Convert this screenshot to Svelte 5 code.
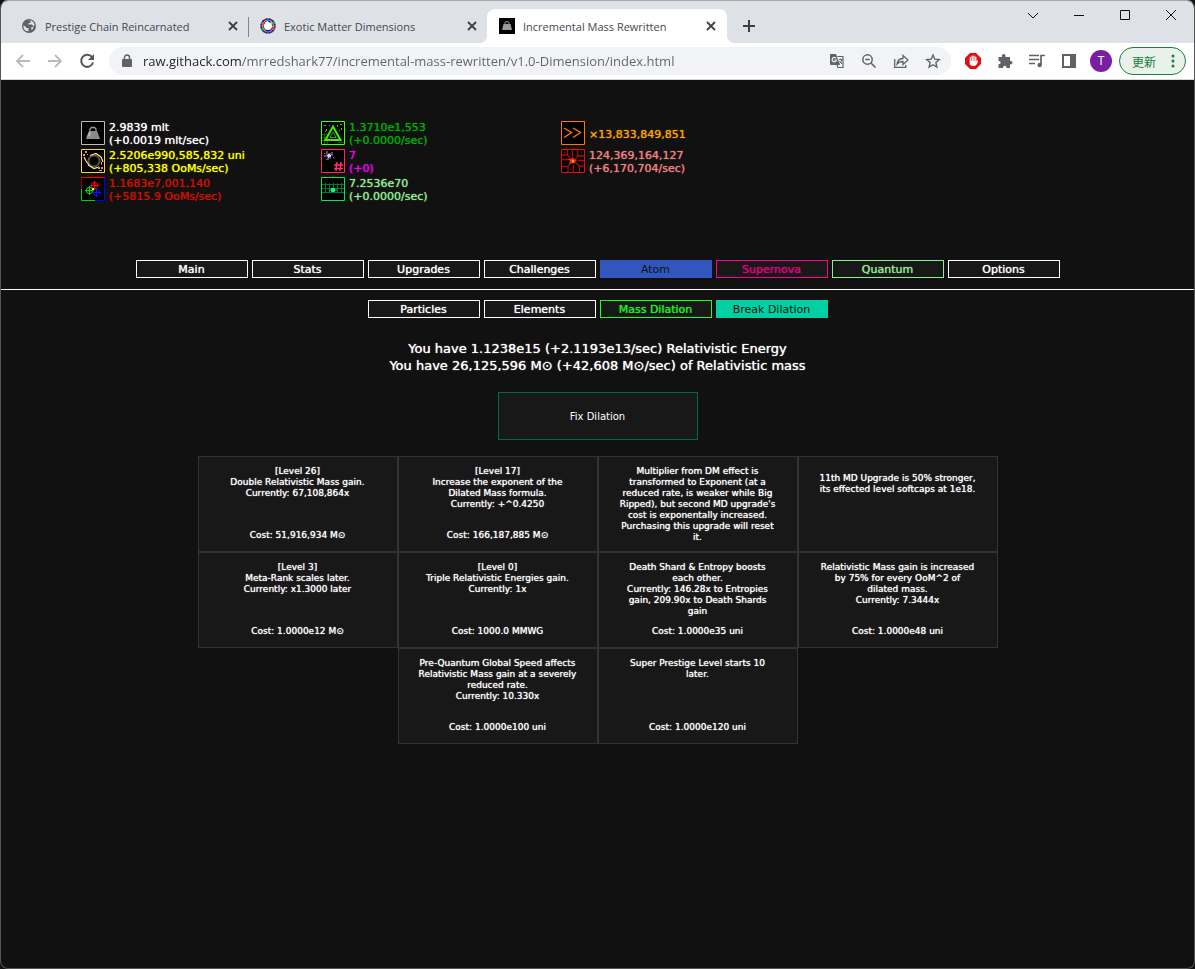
<script>
  const openTabs = [
    { title: 'Prestige Chain Reincarnated', icon: 'globe', active: false },
    { title: 'Exotic Matter Dimensions', icon: 'wheel', active: false },
    { title: 'Incremental Mass Rewritten', icon: 'mass', active: true }
  ];
  const windowButtons = [
    { label: 'Search tabs', d: 'M2 5l5 5 5-5' },
    { label: 'Minimize', d: 'M2 7.500h10' },
    { label: 'Maximize', d: 'M2.500 2.500h9v9h-9z' },
    { label: 'Close', d: 'M2 2l10 10M12 2L2 12' }
  ];
  const resources = [
    [
      { icon: 'mass', name: 'Mass', color: '#ffffff', lines: ['2.9839 mlt', '(+0.0019 mlt/sec)'] },
      { icon: 'hole', name: 'Black hole', color: '#ffff00', lines: ['2.5206e990,585,832 uni', '(+805,338 OoMs/sec)'] },
      { icon: 'quark', name: 'Quarks', color: '#cc1100', lines: ['1.1683e7,001,140', '(+5815.9 OoMs/sec)'] }
    ],
    [
      { icon: 'dilated', name: 'Dilated mass', color: '#00ae00', lines: ['1.3710e1,553', '(+0.0000/sec)'] },
      { icon: 'nova', name: 'Supernova', color: '#f000f0', lines: ['7', '(+0)'] },
      { icon: 'foam', name: 'Quantum foam', color: '#90ee90', lines: ['7.2536e70', '(+0.0000/sec)'] }
    ],
    [
      { icon: 'speed', name: 'Global speed', color: '#ffa500', lines: ['×13,833,849,851'] },
      { icon: 'shard', name: 'Death shards', color: '#f08080', lines: ['124,369,164,127', '(+6,170,704/sec)'] }
    ]
  ];
  const mainTabs = [
    { label: 'Main' }, { label: 'Stats' }, { label: 'Upgrades' }, { label: 'Challenges' },
    { label: 'Atom', kind: 'atom' }, { label: 'Supernova', kind: 'supernova' },
    { label: 'Quantum', kind: 'quantum' }, { label: 'Options' }
  ];
  const subTabs = [
    { label: 'Particles' }, { label: 'Elements' },
    { label: 'Mass Dilation', kind: 'dilation' }, { label: 'Break Dilation', kind: 'break' }
  ];
  const upgrades = [
    [
      { text: ['[Level 26]', 'Double Relativistic Mass gain.', 'Currently: 67,108,864x'], cost: '51,916,934 M', solar: true },
      { text: ['[Level 17]', 'Increase the exponent of the', 'Dilated Mass formula.', 'Currently: +^0.4250'], cost: '166,187,885 M', solar: true },
      { text: ['Multiplier from DM effect is', 'transformed to Exponent (at a', 'reduced rate, is weaker while Big', "Ripped), but second MD upgrade's", 'cost is exponentally increased.', 'Purchasing this upgrade will reset', 'it.'] },
      { text: ['11th MD Upgrade is 50% stronger,', 'its effected level softcaps at 1e18.'], low: true }
    ],
    [
      { text: ['[Level 3]', 'Meta-Rank scales later.', 'Currently: x1.3000 later'], cost: '1.0000e12 M', solar: true },
      { text: ['[Level 0]', 'Triple Relativistic Energies gain.', 'Currently: 1x'], cost: '1000.0 MMWG' },
      { text: ['Death Shard & Entropy boosts', 'each other.', 'Currently: 146.28x to Entropies', 'gain, 209.90x to Death Shards', 'gain'], cost: '1.0000e35 uni' },
      { text: ['Relativistic Mass gain is increased', 'by 75% for every OoM^2 of', 'dilated mass.', 'Currently: 7.3444x'], cost: '1.0000e48 uni' }
    ],
    [
      { text: ['Pre-Quantum Global Speed affects', 'Relativistic Mass gain at a severely', 'reduced rate.', 'Currently: 10.330x'], cost: '1.0000e100 uni' },
      { text: ['Super Prestige Level starts 10', 'later.'], cost: '1.0000e120 uni' }
    ]
  ];
  const wheelColors = ['#e6002e', '#1018f0', '#00a020', '#202060'];
  const wheel = Array.from({ length: 24 }, (_, i) => {
    const a = (i * Math.PI) / 12;
    return { x: 8 + 6.8 * Math.cos(a), y: 8 + 6.8 * Math.sin(a), u: 8 + 4.8 * Math.cos(a + 0.13), v: 8 + 4.8 * Math.sin(a + 0.13), i };
  });
</script>

{#snippet favicon(kind)}
  <svg width="16" height="16" viewBox="0 0 16 16" aria-hidden="true">
    {#if kind === 'globe'}
      <circle cx="8" cy="8" r="7" fill="#5f6368" />
      <path d="M2.500 7.500Q5 8 5.500 10h2v3.200Q4 13.500 2.500 10zM7 3h2.500v2H7.500v1.500h3.500l1.500 2 1-1Q13.500 4 10 2.500zM10.500 9h2l-1 2.500h-1.500z" fill="#dee1e6" />
    {:else if kind === 'wheel'}
      <circle cx="8" cy="8" r="6.500" fill="#fff" />
      {#each wheel as d}
        <circle cx={d.x} cy={d.y} r="1.100" fill={wheelColors[d.i % 4]} />
        <circle cx={d.u} cy={d.v} r="0.900" fill={wheelColors[(d.i >> 2) % 3]} />
      {/each}
      <path d="M8 3l1 3 3-2-1 3 2 2-3 0 0 3-2-2-3 2 1-3-3-2 3-1-1-2z" fill="#fff" />
    {:else}
      <path d="M0 0h16v16H0z" fill="#000" />
      <path d="M3 12l1.500-6h7l1.500 6z" fill="#999" />
      <path d="M6 6.500V5q0-1.500 2-1.500t2 1.500v1.500" fill="none" stroke="#999" />
    {/if}
  </svg>
{/snippet}

{#snippet art(kind, name)}
  <svg width="24" height="24" viewBox="0 0 24 24" role="img" aria-label={name}>
    <path d="M0 0h24v24H0z" fill="#000" />
    {#if kind === 'mass'}
      <path d="M5 18l1-3 2-5h8l2 5 1 3z" fill="#8b8b8b" />
      <path d="M8 11l-2 5 3-1 1-4z" fill="#b4b4b4" />
      <path d="M9 10V8l1.500-1.500h3L15 8v2" fill="none" stroke="#999" stroke-width="1.300" />
      <path d="M.5.5h23v23H.5z" fill="none" stroke="#bcbcbc" />
    {:else if kind === 'hole'}
      <circle cx="13" cy="12" r="6" fill="#000" stroke="#8d7440" />
      <circle cx="13" cy="12" r="5" fill="none" stroke="#555" />
      <path d="M3 8l2 4 3 4M9 6.500l6-2 5 3.500 2 5M7 16l6 3.500 5-1.500" fill="none" stroke="#ffe09a" stroke-width="1.200" />
      <path d="M2 5h2v2H2zM4 2h2v2H4zM17 18h2v2h-2zM20 18h2v2h-2zM18 21h3v1h-3zM6 5h1v1H6zM20 13h1v3h-1z" fill="#d29b44" />
      <path d="M.5.5h23v23H.5z" fill="none" stroke="#ffce54" />
    {:else if kind === 'quark'}
      <g fill="none">
        <g stroke="#f00"><circle cx="13.500" cy="8.500" r="3.200" /><path d="M9 8.500h9M13.500 4v9" /></g>
        <g stroke="#00e000"><circle cx="8.500" cy="13.500" r="3.200" /><path d="M4 13.500h9M8.500 9v9" /></g>
        <g stroke="#1010ff"><circle cx="15.500" cy="15.500" r="3.200" /><path d="M11 15.500h9M15.500 11v9" /></g>
      </g>
      <path d="M11 11h2v2h-2z" fill="#ff0" />
      <path d="M0 .5h24" stroke="#f00" fill="none" />
      <path d="M.5 12v11.500H14" stroke="#00d400" fill="none" />
      <path d="M.5 1v11" stroke="#900" fill="none" />
      <path d="M23.500 1v22.500H14" stroke="#00f" fill="none" />
    {:else if kind === 'dilated'}
      <path d="M1 13.500h8M1 16.500h6M1 19.500h5M3.500 12v11M6.500 14v9M17 21.500h6" stroke="#185808" fill="none" />
      <path d="M12 5.500l7.500 13.500h-15z" fill="#000" stroke="#3cf000" stroke-width="2" />
      <path d="M12 11l3 5.500H9z" fill="none" stroke="#28a800" />
      <path d="M3 4h2v1H3zM5 8h1v2H5zM8 4h1v1H8zM16 4h1v2h-1zM19 3h2v1h-2zM20 7h1v2h-1zM18 9h1v1h-1zM4 10h1v1H4z" fill="#35d000" />
      <path d="M.5.5h23v23H.5z" fill="none" stroke="#48ff00" />
    {:else if kind === 'nova'}
      <path d="M5 2h2v2h3V3h2v4h-2v3H8v1H6V8H3V6h2z" fill="#61436f" />
      <path d="M3 4h1v1H3zM10 5h1v1h-1zM5 10h1v1H5zM12 8h1v1h-1z" fill="#a5652e" />
      <path d="M7 5h2v1h1v2H8v1H7V7H6V6h1z" fill="#d9d0ff" />
      <path d="M16 13l-1 9M20 13l-1 9M13 16h9M13 19.500h9" stroke="#ff3068" stroke-width="1.600" fill="none" />
      <path d="M.5.5h23v23H.5z" fill="none" stroke="#ff2860" />
    {:else if kind === 'foam'}
      <path d="M1 7.500h22M1 11.500h8l3 1 3-1h8M1 15.500h22M4.500 6v10M8.500 6v10M12.500 6v10M16.500 6v10M20.500 6v10" stroke="#047533" fill="none" />
      <circle cx="12" cy="13" r="2.300" fill="#2cff75" />
      <path d="M8 13h8" stroke="#1bd65c" />
      <path d="M.5.500h23v23H.5z" fill="none" stroke="#00e85c" />
    {:else if kind === 'speed'}
      <path d="M3 7l7.500 4.500L3 16.500M12 7l7.500 4.500-7.500 5" fill="none" stroke="#ff7300" stroke-width="1.400" />
      <path d="M.5.5h23v23H.5z" fill="none" stroke="#ff7600" />
    {:else}
      <path d="M6.500 1v5H1M1 10.500h7M11.500 1v7M16.500 1v6H23M23 11.500h-6M1 17.500h6V23M12.500 23v-7M18.500 23v-6H23M6 6l4 4M18 6l-4 4M7 17l4-4M18 17l-4-4" stroke="#a80c08" stroke-width="1.300" fill="none" />
      <path d="M3 3h2v1H3zM9 4h1v1H9zM20 3h1v1h-1zM3 14h2v1H3zM20 14h2v1h-2zM9 20h2v1H9zM15 20h1v1h-1z" fill="#511" />
      <path d="M12 8l1 2 3 1-2 2-1 2-2-1-3 1 1-3-2-2 3 0z" fill="#e83a10" />
      <path d="M11 11h2v2h-2z" fill="#ff9a40" />
      <path d="M.5.5h23v23H.5z" fill="none" stroke="#e01010" />
    {/if}
  </svg>
{/snippet}

{#snippet lines(list)}
  {#each list as line}<span class="line">{line}</span>{/each}
{/snippet}

<div class="window">
  <header>
    <div class="titlebar">
      <div class="tabs">
        {#each openTabs as tab, i}
          <div class="tab" class:active={tab.active} class:divided={i === 0}>
            {@render favicon(tab.icon)}
            <span class="title">{tab.title}</span>
            <button class="plain" aria-label="Close tab">
              <svg width="10" height="10" viewBox="0 0 10 10"><path d="M1 1l8 8M9 1L1 9" stroke="#3c4043" stroke-width="1.800" /></svg>
            </button>
          </div>
        {/each}
        <button class="plain new" aria-label="New tab">
          <svg width="12" height="12" viewBox="0 0 12 12"><path d="M6 0v12M0 6h12" stroke="#3c4043" stroke-width="2" /></svg>
        </button>
      </div>
      <div class="controls">
        {#each windowButtons as b}
          <button class="plain" aria-label={b.label}>
            <svg width="14" height="14" viewBox="0 0 14 14"><path d={b.d} fill="none" stroke="#111" /></svg>
          </button>
        {/each}
      </div>
    </div>

    <div class="toolbar">
      <div class="nav">
        <button class="plain" aria-label="Back"><svg width="16" height="16" viewBox="0 0 16 16"><path d="M15 8H2M8 2L2 8l6 6" fill="none" stroke="#b8babd" stroke-width="1.800" /></svg></button>
        <button class="plain" aria-label="Forward"><svg width="16" height="16" viewBox="0 0 16 16"><path d="M1 8h13M8 2l6 6-6 6" fill="none" stroke="#b8babd" stroke-width="1.800" /></svg></button>
        <button class="plain" aria-label="Reload"><svg width="16" height="16" viewBox="0 0 16 16"><path d="M13 4.200A6 6 0 1 0 14 9.500" fill="none" stroke="#54585d" stroke-width="2" /><path d="M15 1v6H9z" fill="#54585d" /></svg></button>
      </div>
      <div class="omnibox">
        <svg width="10" height="14" viewBox="0 0 10 14" aria-hidden="true"><path d="M1 5h8q1 0 1 1v6q0 1-1 1H1q-1 0-1-1V6q0-1 1-1z" fill="#5f6368" /><path d="M2.500 5V3.500a2.500 2.500 0 0 1 5 0V5" fill="none" stroke="#5f6368" stroke-width="1.500" /></svg>
        <input type="text" aria-label="Address" value="raw.githack.com/mrredshark77/incremental-mass-rewritten/v1.0-Dimension/index.html" />
        <div class="actions">
          <button class="plain" aria-label="Translate">
            <svg width="16" height="16" viewBox="0 0 16 16"><path d="M2 1h5l4 11H2q-1 0-1-1V2q0-1 1-1z" fill="#5f6368" /><path d="M8.500 3.500h5.500v11H9l-1-2.500" fill="none" stroke="#5f6368" stroke-width="1.200" /><path d="M7 5.200A2.200 2.200 0 1 0 7.500 7H5.500" fill="none" stroke="#f1f3f4" stroke-width="1.200" /><path d="M10 6.500h3.500M11.700 5.500v1M13 6.500q-1 3-2.500 4M10.500 8l2.500 3" fill="none" stroke="#5f6368" /></svg>
          </button>
          <button class="plain" aria-label="Zoom out">
            <svg width="16" height="16" viewBox="0 0 16 16"><circle cx="6.500" cy="6.500" r="4.700" fill="none" stroke="#5f6368" stroke-width="1.500" /><path d="M10 10l4.500 4.500M4.200 6.500h4.600" stroke="#5f6368" stroke-width="1.600" /></svg>
          </button>
          <button class="plain" aria-label="Share">
            <svg width="16" height="16" viewBox="0 0 16 16"><path d="M1.700 6v8.300h11V12" fill="none" stroke="#5f6368" stroke-width="1.300" /><path d="M4 11q.5-5 6-5.500v-3l5 4.500-5 4.500V8.500Q6 8.500 4 11z" fill="none" stroke="#5f6368" stroke-width="1.300" /></svg>
          </button>
          <button class="plain" aria-label="Bookmark">
            <svg width="16" height="16" viewBox="0 0 16 16"><path d="M8 2l1.800 4.200 4.500.4-3.400 3 1 4.400L8 11.700 4.100 14l1-4.400-3.400-3 4.500-.4z" fill="none" stroke="#5f6368" stroke-width="1.400" /></svg>
          </button>
        </div>
      </div>
      <div class="extensions">
        <button class="plain" aria-label="Ad blocker">
          <svg width="16" height="16" viewBox="0 0 16 16"><path d="M5 0h6l5 5v6l-5 5H5l-5-5V5z" fill="#e40d14" /><path d="M5.400 9V4.500M7.200 8V3.200M9 8V3.200M10.800 9V4.200" stroke="#fff" stroke-width="1.300" stroke-linecap="round" /><path d="M4.800 8h6.700l1.500-1q-.5 6-4.700 6T4.800 9z" fill="#fff" /></svg>
        </button>
        <button class="plain" aria-label="Extensions">
          <svg width="16" height="16" viewBox="0 0 16 16"><path d="M1.500 4H5q-.5-3 1.700-3T8.500 4H13v4q2.500-.3 2.500 1.700T13 11.500V15H9.500q0-2.300-1.700-2.300T6 15H1.500v-3.700q2.200 0 2.200-1.700T1.500 8z" fill="#5f6368" /></svg>
        </button>
        <button class="plain" aria-label="Media controls">
          <svg width="16" height="16" viewBox="0 0 16 16"><path d="M0 2.500h10M0 6.500h10M0 10.500h6M12 12V2.500h4" fill="none" stroke="#5f6368" stroke-width="1.700" /><circle cx="10.700" cy="12" r="2.200" fill="#5f6368" /></svg>
        </button>
        <button class="plain" aria-label="Side panel">
          <svg width="16" height="16" viewBox="0 0 16 16"><path d="M2 2h12v12H2z" fill="none" stroke="#5f6368" stroke-width="2" /><path d="M9 2h5v12H9z" fill="#5f6368" /></svg>
        </button>
        <button class="avatar" aria-label="Profile">T</button>
      </div>
      <button class="update">更新
        <svg width="4" height="14" viewBox="0 0 4 14" aria-hidden="true"><circle cx="2" cy="2" r="1.500" fill="#188038" /><circle cx="2" cy="7" r="1.500" fill="#188038" /><circle cx="2" cy="12" r="1.500" fill="#188038" /></svg>
      </button>
    </div>
  </header>

  <main>
    <section class="resources">
      {#each resources as column}
        <div class="column">
          {#each column as r}
            <div class="resource" style="color: {r.color}">
              {@render art(r.icon, r.name)}
              <div class="amount">{@render lines(r.lines)}</div>
            </div>
          {/each}
        </div>
      {/each}
    </section>

    <nav class="menu primary">
      {#each mainTabs as t}<button class={['menu-item', t.kind]}>{t.label}</button>{/each}
    </nav>
    <nav class="menu">
      {#each subTabs as t}<button class={['menu-item', t.kind]}>{t.label}</button>{/each}
    </nav>

    <div class="summary">
      <span class="line">You have 1.1238e15 (+2.1193e13/sec) Relativistic Energy</span>
      <span class="line">You have 26,125,596 M⊙ (+42,608 M⊙/sec) of Relativistic mass</span>
    </div>

    <button class="fix">Fix Dilation</button>

    <section class="upgrades">
      {#each upgrades as row}
        <div class="row">
          {#each row as u}
            <button class="upgrade" class:low={u.low}>
              <span class="text">{@render lines(u.text)}</span>
              {#if u.cost}<span class="line">Cost: {u.cost}{#if u.solar}⊙{/if}</span>{/if}
            </button>
          {/each}
        </div>
      {/each}
    </section>
  </main>
</div>

<style>
  :global(body) { margin: 0; background: #111; }
  * { box-sizing: border-box; }
  button, input { font: inherit; margin: 0; }
  svg { display: block; flex: none; }
  .line { display: block; white-space: nowrap; }

  .window {
    display: flex; flex-direction: column; min-height: 100vh;
    border: 1px solid #a8a8a8; border-color: #a8a8a8 #555 #555;
    border-radius: 8px; overflow: hidden; background: #111;
    font-family: 'DejaVu Sans', sans-serif;
  }
  .plain { display: flex; align-items: center; justify-content: center; padding: 0; border: 0; background: none; }
  header { font-family: 'Open Sans', 'Noto Sans', sans-serif; }

  .titlebar { display: flex; justify-content: space-between; height: 42px; background: #dee1e6; }
  .tabs { display: flex; padding: 8px 0 0 8px; }
  .tab {
    display: flex; align-items: center; width: 239px; padding: 0 10px 0 12px; gap: 8px;
    font-size: 11px; color: #45494d; border-radius: 8px 8px 0 0; position: relative;
  }
  .tab.active { width: 240px; padding-right: 11px; background: #fff; }
  .tab.active::before, .tab.active::after {
    content: ''; position: absolute; bottom: 0; width: 8px; height: 8px;
  }
  .tab.active::before { left: -8px; background: radial-gradient(circle at 0 0, transparent 8px, #fff 8px); }
  .tab.active::after { right: -8px; background: radial-gradient(circle at 100% 0, transparent 8px, #fff 8px); }
  .tab.divided::after { content: ''; position: absolute; right: -1px; top: 8px; width: 1px; height: 20px; background: #80868b; }
  .title { flex: 1; white-space: nowrap; }
  .new { width: 28px; margin-left: 8px; }
  .controls { display: flex; height: 28px; }
  .controls .plain { width: 46px; }

  .toolbar { display: flex; align-items: center; height: 37px; padding: 0 8px 0 14px; background: #fff; border-bottom: 1px solid #d5d7da; }
  .nav { display: flex; gap: 16px; margin-right: 14px; }
  .omnibox { display: flex; flex: 1; align-items: center; height: 28px; padding: 0 10px 0 13px; gap: 11px; border-radius: 14px; background: #f1f3f4; }
  input {
    flex: 1; min-width: 0; padding: 0; border: 0; outline: 0; font-size: 13px;
    color: transparent; background: linear-gradient(90deg, #202124 98px, #5f6368 98px);
    background-clip: text; -webkit-background-clip: text;
  }
  .actions { display: flex; gap: 16px; }
  .extensions { display: flex; align-items: center; gap: 16px; padding: 0 7px 0 14px; }
  .avatar { width: 22px; height: 22px; margin-left: -3px; padding: 0; border: 0; border-radius: 50%; background: #7b1fa2; color: #fff; font-size: 12px; line-height: 22px; }
  .update {
    display: flex; align-items: center; gap: 15px; height: 28px; padding: 0 10px 0 12px;
    border: 1px solid #188038; border-radius: 14px; background: #e8f2eb; color: #188038;
    font-family: 'Noto Sans CJK JP', sans-serif; font-size: 12px; white-space: nowrap;
  }

  main { flex: 1; font-size: 11px; line-height: 13px; color: #fff; text-shadow: 0 0 1px currentColor; }
  .resources { display: flex; height: 180px; padding: 39px 0 0 80px; }
  .column { display: flex; flex-direction: column; width: 240px; }
  .resource { display: flex; align-items: center; gap: 4px; height: 28px; }
  .amount { padding-top: 2px; }

  .menu { display: flex; justify-content: center; gap: 4px; padding-bottom: 22px; }
  .menu.primary { padding-bottom: 11px; margin-bottom: 10px; border-bottom: 1px solid #fff; }
  .menu-item { width: 112px; height: 18px; padding: 1px 0 0; border: 1px solid #fff; background: #181818; color: #fff; line-height: 15px; text-shadow: inherit; }
  .atom { background: #3156be; border-color: #3156be; color: #111; text-shadow: none; }
  .supernova { border-color: #ff0090; color: #e0007f; }
  .quantum { border-color: #90ee90; color: #90ee90; }
  .dilation { border-color: #1eff1e; color: #22f022; }
  .break { background: #00d0a2; border-color: #00d0a2; color: #111; text-shadow: none; }

  .summary { font-size: 13px; line-height: 17px; text-align: center; }
  .fix { display: block; width: 200px; height: 48px; margin: 18px auto 16px; border: 1px solid #00694d; background: #181818; color: #fff; font-size: 10px; }

  .upgrades { font-size: 9px; line-height: 11px; }
  .row { display: flex; justify-content: center; }
  .upgrade {
    display: flex; flex-direction: column; align-items: center; width: 200px; height: 96px;
    padding: 9px 4px; border: 1px solid #333; background: #181818; color: #fff; text-align: center; text-shadow: inherit;
  }
  .upgrade.low { padding-top: 16px; }
  .text { min-height: 64px; }
</style>
